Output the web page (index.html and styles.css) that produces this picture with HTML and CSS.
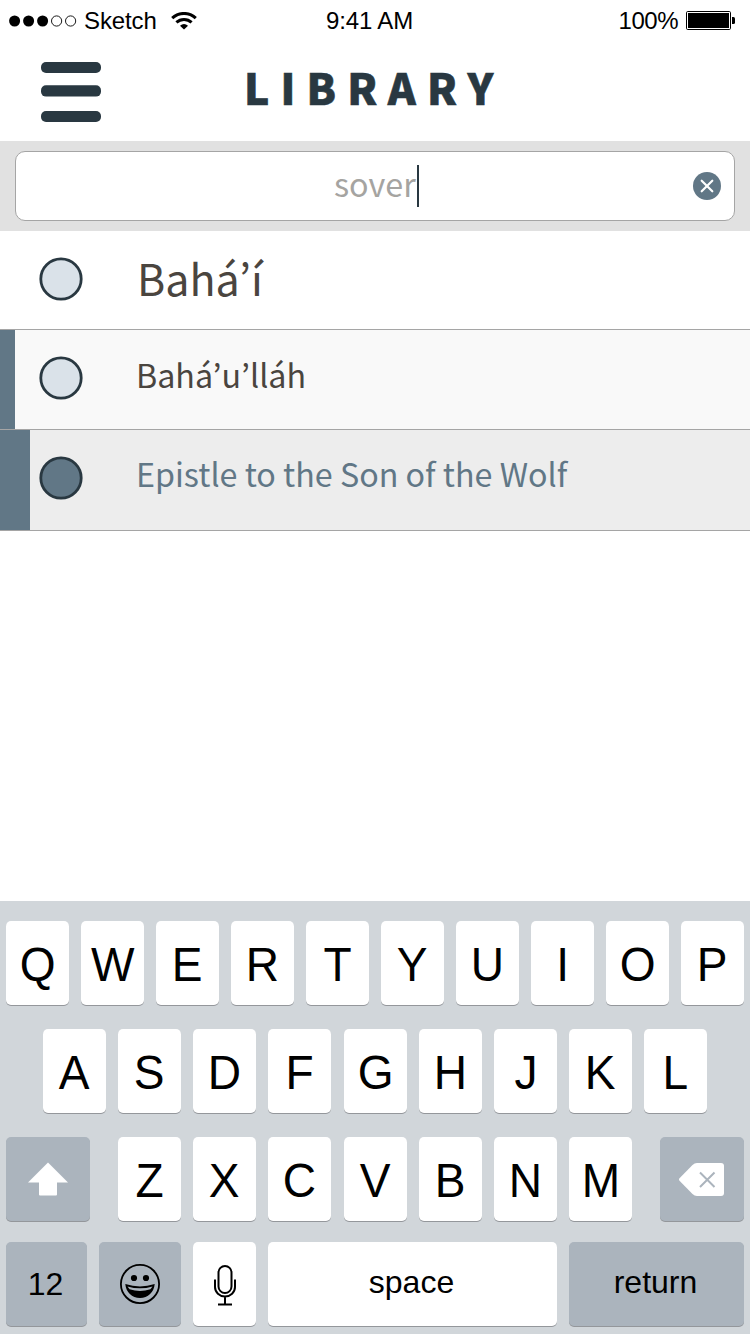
FILE: index.html
```html
<!DOCTYPE html>
<html lang="en">
<head>
<meta charset="utf-8">
<title>Library</title>
<link rel="stylesheet" href="styles.css">
</head>
<body>
<div class="screen">
  <div class="status">
    <div class="status-left">
      <svg class="signal" width="68" height="12" viewBox="0 0 68 12">
        <circle cx="5.6" cy="6" r="5.5"/><circle cx="19.6" cy="6" r="5.5"/><circle cx="33.6" cy="6" r="5.5"/>
        <circle class="ring" cx="47.6" cy="6" r="5.1"/><circle class="ring" cx="61.6" cy="6" r="5.1"/>
      </svg>
      <span class="carrier">Sketch</span>
      <svg class="wifi" width="26" height="18" viewBox="0 0 26 18">
        <path class="arc" d="M1.2 6.2a17 17 0 0 1 23.6 0M5.4 10.4a11.2 11.2 0 0 1 15.2 0"/>
        <path d="M9 13.800Q13 10.200 17 13.800L13 17.600z"/>
      </svg>
    </div>
    <span class="time">9:41 AM</span>
    <div class="status-right">
      <span class="percent">100%</span>
      <svg class="battery" width="49" height="19" viewBox="0 0 49 19">
        <rect class="case" x=".5" y=".5" width="44" height="18" rx="1.2"/>
        <rect x="2" y="2" width="41" height="15"/>
        <path d="M46 6h1.5q1.5 0 1.5 1.5v4q0 1.5-1.5 1.5H46z"/>
      </svg>
    </div>
  </div>

  <header class="header">
    <svg class="menu" width="60" height="60" viewBox="0 0 60 60">
      <rect y="0" width="60" height="11" rx="5"/><rect y="23.3" width="60" height="11.3" rx="5"/><rect y="49" width="60" height="11" rx="5"/>
    </svg>
    <h1 class="title">LIBRARY</h1>
  </header>

  <div class="search">
    <div class="field">
      <span class="query">sover</span><span class="caret"></span>
      <svg class="clear" width="28" height="28" viewBox="0 0 28 28">
        <circle cx="14" cy="14" r="14"/><path d="M8.7 8.7l10.6 10.6M19.3 8.7L8.7 19.3"/>
      </svg>
    </div>
  </div>

  <div class="row root">
    <svg class="radio" width="44" height="44"><circle cx="22" cy="22" r="20.2"/></svg>
    <span class="label">Bahá’í</span>
  </div>
  <div class="row author">
    <svg class="radio" width="44" height="44"><circle cx="22" cy="22" r="20.2"/></svg>
    <span class="label">Bahá’u’lláh</span>
  </div>
  <div class="row book">
    <svg class="radio" width="44" height="44"><circle cx="22" cy="22" r="20.2"/></svg>
    <span class="label">Epistle to the Son of the Wolf</span>
  </div>
  <div class="blank"></div>

  <div class="keyboard">
    <div class="keys top">
      <span class="key"><b>Q</b></span><span class="key"><b>W</b></span><span class="key"><b>E</b></span><span class="key"><b>R</b></span><span class="key"><b>T</b></span><span class="key"><b>Y</b></span><span class="key"><b>U</b></span><span class="key"><b>I</b></span><span class="key"><b>O</b></span><span class="key"><b>P</b></span>
    </div>
    <div class="keys home">
      <span class="key"><b>A</b></span><span class="key"><b>S</b></span><span class="key"><b>D</b></span><span class="key split"><b>F</b></span><span class="key"><b>G</b></span><span class="key"><b>H</b></span><span class="key"><b>J</b></span><span class="key"><b>K</b></span><span class="key"><b>L</b></span>
    </div>
    <div class="keys low">
      <span class="key dark shift"><svg width="40" height="34" viewBox="0 0 40 34"><path d="M20 .5L40 20.5H29V32.5q0 1-1 1H12q-1 0-1-1V20.5H0z"/></svg></span>
      <span class="key"><b>Z</b></span><span class="key"><b>X</b></span><span class="key split"><b>C</b></span><span class="key"><b>V</b></span><span class="key"><b>B</b></span><span class="key"><b>N</b></span><span class="key"><b>M</b></span>
      <span class="key dark delete"><svg width="45" height="33" viewBox="0 0 45 33"><path d="M.5 15.3L13.5 2Q15.5 0 18 0H42q3 0 3 3V30q0 3-3 3H18q-2.5 0-4.5-2L.5 17.7Q-.5 16.5 .5 15.3z"/><path class="cross" d="M21 9.5l14.5 14.5M35.5 9.5L21 24"/></svg></span>
    </div>
    <div class="keys bottom">
      <span class="key dark num"><i>12</i></span>
      <span class="key dark emoji"><svg width="40" height="40" viewBox="0 0 40 40"><circle class="line" cx="20" cy="20" r="19.1"/><circle cx="14" cy="14" r="3.1"/><circle cx="26" cy="14" r="3.1"/><path fill-rule="evenodd" d="M5.3 20Q20 24.800 34.700 20C34 28.300 28 34 20 34S6 28.300 5.300 20zM7.500 22.400L9.600 25.300Q20 28.600 30.400 25.300L32.500 22.400Q20 26.200 7.500 22.400z"/></svg></span>
      <span class="key mic"><svg width="22" height="41" viewBox="0 0 22 41"><rect x="4.500" y="1" width="13" height="27" rx="6.500"/><path d="M1 14.5v7.500a10 9.500 0 0 0 20 0v-7.500M11 31.500v8M4 39.500h14"/></svg></span>
      <span class="key space"><i>space</i></span>
      <span class="key dark return"><i>return</i></span>
    </div>
  </div>
</div>
</body>
</html>
```
FILE: styles.css
```css
* { box-sizing: border-box; }
body { margin: 0; background: #fff; font-family: "Liberation Sans", sans-serif; color: #000; }
.screen { width: 750px; height: 1334px; display: flex; flex-direction: column; overflow: hidden; }

.status { height: 40px; display: grid; grid-template-columns: 300px 1fr 300px; padding: 0 15px 0 9px; font-size: 24px; line-height: 42px; white-space: nowrap; }
.status-left { display: flex; align-items: center; }
.signal { margin-top: -1px; }
.ring { fill: none; stroke: #000; stroke-width: .9; }
.carrier { margin-left: 7px; letter-spacing: -.1px; }
.wifi { margin: -1px 0 0 14px; }
.arc { fill: none; stroke: #000; stroke-width: 3; }
.time { padding-left: 17px; letter-spacing: -.15px; }
.status-right { display: flex; align-items: center; justify-content: flex-end; }
.percent { letter-spacing: -.5px; }
.battery { margin-left: 8px; margin-top: -1px; }
.case { fill: none; stroke: #000; }

.header { height: 101px; display: flex; padding-left: 41px; }
.menu { margin-top: 22px; fill: #293841; }
.title { margin: 0 0 0 143px; font: 900 42.5px/94px "Noto Sans CJK KR", sans-serif; letter-spacing: 11.1px; color: #293841; white-space: nowrap; -webkit-text-stroke: .6px #293841; }

.search { height: 90px; padding: 10px 15px; background: #e1e1e1; }
.field { height: 70px; display: flex; align-items: center; background: #fff; border: 1px solid #a5a5a5; border-radius: 10px; padding: 0 13px 0 318px; }
.query { font: 400 32.3px/62px "Noto Sans CJK KR", sans-serif; color: #a5a4a1; padding-bottom: 7px; }
.caret { width: 2px; height: 42px; background: #293841; margin-left: 1px; }
.clear { margin-left: auto; fill: #617786; }
.clear path { fill: none; stroke: #fff; stroke-width: 2.2; stroke-linecap: round; }

.row { display: flex; padding: 26px 0 0 39px; border-bottom: 1px solid #a5a5a5; font: 400 32.25px/70px "Noto Sans CJK KR", sans-serif; color: #4a453f; white-space: nowrap; }
.radio { flex: none; fill: #dae2e9; stroke: #293841; stroke-width: 2.8; }
.root { height: 99px; font-size: 43px; }
.root .label { margin: -15px 0 0 54px; }
.author { height: 100px; background: linear-gradient(to right, #617786 15px, #f9f9f9 15px); }
.author .label { margin: -17px 0 0 53px; }
.book { height: 101px; background: linear-gradient(to right, #617786 30px, #ededed 30px); color: #617786; }
.book .label { margin: -18px 0 0 53px; }
.book .radio { fill: #617786; }
.blank { flex: 1; }

.keyboard { height: 433px; padding: 20px 6px 0; background: #d1d6da; }
.keys { display: flex; gap: 12px; height: 84px; margin-bottom: 24px; }
.home { padding-left: 37px; }
.low { margin-bottom: 21px; }
.key { width: 63px; height: 84px; flex: none; display: flex; align-items: center; justify-content: center; background: #fff; border-radius: 5px; box-shadow: 0 1px 0 #94979b; }
.split { margin-right: 1px; }
.key b { font-weight: 400; font-size: 48px; line-height: 84px; padding-top: 3px; transform: scaleX(.96); }
.key i { font-style: normal; font-size: 32px; line-height: 84px; margin-right: 2px; }
.dark { background: #abb4bd; }
.shift { width: 84px; margin-right: 16px; }
.delete { width: 84px; margin-left: 16px; }
.shift svg, .delete svg { fill: #fff; }
.delete svg { margin-right: 1px; }
.cross { stroke: #abb4bd; stroke-width: 2; fill: none; }
.num { width: 81px; }
.emoji { width: 82px; }
.line { fill: none; stroke: #000; stroke-width: 1.8; }
.mic svg { fill: none; stroke: #000; stroke-width: 2; margin-top: 2px; }
.space { width: 289px; }
.return { width: 175px; }
.space i, .return i { padding-bottom: 4px; }
```
